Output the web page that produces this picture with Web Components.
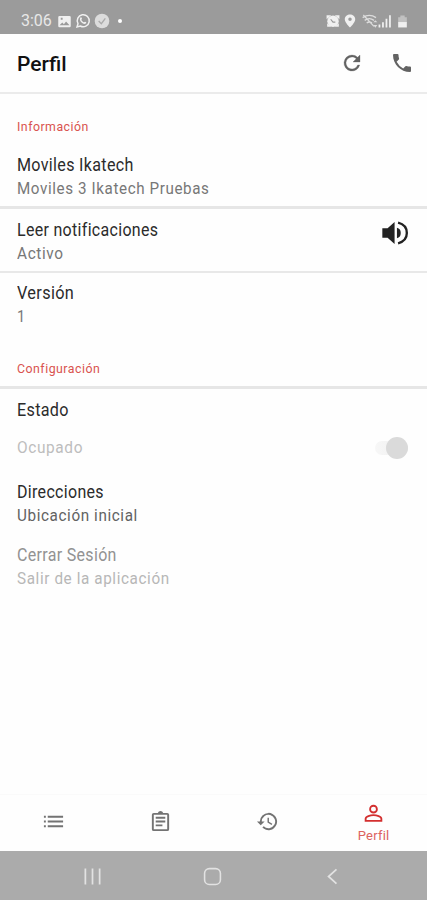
<!DOCTYPE html>
<html lang="es">
<head>
<meta charset="utf-8">
<title>Perfil</title>
<style>
  body { margin: 0; background: #fefefe; font-family: Roboto, "Liberation Sans", sans-serif; }
</style>
</head>
<body>
<app-perfil></app-perfil>

<script>
    // Texto ajustado a un ancho (letra condensada)
    class TextoAjustado extends HTMLElement {
      constructor() {
        super();
        this.attachShadow({ mode: 'open' });
      }

      connectedCallback() {
        this.shadowRoot.innerHTML = `
          <style>
            :host { display: block; white-space: nowrap; }
            span { display: inline-block; transform-origin: 0 50%; letter-spacing: var(--espacio, .04em); }
          </style>
          <span><slot></slot></span>
        `;
        const span = this.shadowRoot.querySelector('span');
        const ancho = parseFloat(this.getAttribute('ancho'));
        this.style.width = `${ancho}px`;
        span.style.transform = `scaleX(${ancho / span.offsetWidth})`;
      }
    }

    // Iconos
    const ICONOS = {
      imagen: '<path fill-rule="evenodd" d="M4 3h16a2 2 0 0 1 2 2v14a2 2 0 0 1-2 2H4a2 2 0 0 1-2-2V5a2 2 0 0 1 2-2zm0 15h16l-5.500-6-3.500 4.500-2.500-3zM6 6v3h3V6z"/>',
      whatsapp: '<path d="M3 21l1.500-5A9 9 0 1 1 8 19.500z" fill="none" stroke="currentColor" stroke-width="2.200"/><path d="M8 7c1-1 2-.5 2.500 1.500L9.500 10c1 2 2 3 4 4l1.500-1c2 .7 2.500 1.500 1.500 2.500C13 19 5 11 8 7z"/>',
      check: '<circle cx="12" cy="12" r="11"/><path d="M7 12l4 4 6-8" fill="none" stroke="#aaa" stroke-width="2"/>',
      alarma: '<circle cx="12" cy="12.500" r="9.800"/><path d="M1 9V2h8zM23 9V2h-8zM2 16v6h7zM22 16v6h-7z"/><path d="M8 9l4 5h4" fill="none" stroke="#999" stroke-width="2"/>',
      lugar: '<path fill-rule="evenodd" d="M12 1C7.500 1 3 4.500 3 9c0 6 9 14 9 14s9-8 9-14c0-4.500-4.500-8-9-8zm0 5a3 3 0 1 1 0 6 3 3 0 0 1 0-6z"/>',
      wifi: '<g fill="none" stroke="currentColor" stroke-width="2"><path d="M1 7q10-7 20 0M4 11q7-5 14 0M7 15q4-3 8 0M2 3l16 17"/></g><path d="M17 14l3-3 3 3zM17 18l3 4 3-4z"/>',
      senal: '<path d="M1 18h3v5H1zM7 14h3v9H7zM13 8h3v15h-3zM19 2h3v21h-3z"/>',
      bateria: '<path opacity=".45" d="M8 1h8v3h4v10H4V4h4z"/><path d="M4 13h16v10H4z"/>',
      recargar: '<path d="M17.650 6.350A7.960 7.960 0 0 0 12 4a8 8 0 1 0 7.730 10h-2.080A6 6 0 1 1 12 6c1.660 0 3.140.690 4.220 1.780L13 11h7V4z" stroke="currentColor" stroke-width=".3"/>',
      telefono: '<path d="M6.620 10.790a15.150 15.150 0 0 0 6.590 6.590l2.200-2.200a1 1 0 0 1 1.020-.240c1.120.370 2.330.570 3.570.570a1 1 0 0 1 1 1V20a1 1 0 0 1-1 1C10.610 21 3 13.390 3 4a1 1 0 0 1 1-1h3.500a1 1 0 0 1 1 1c0 1.250.200 2.450.570 3.570a1 1 0 0 1-.250 1.020z"/>',
      volumen: '<path d="M2 8h4.500L12.500 2.500v19L6.500 16H2z"/><path d="M14.500 7.500q3.300.8 3.300 4.500t-3.300 4.500z"/><path d="M15.500 3.200q7.500 2 7.500 8.800t-7.500 8.800" fill="none" stroke="currentColor" stroke-width="2"/>',
      lista: '<path d="M2 6h2v2H2zM2 11h2v2H2zM2 16h2v2H2zM6 6h16v2H6zM6 11h16v2H6zM6 16h16v2H6z"/>',
      notas: '<path fill-rule="evenodd" d="M19 3h-4.180a3 3 0 0 0-5.640 0H5a2 2 0 0 0-2 2v15a2 2 0 0 0 2 2h14a2 2 0 0 0 2-2V5a2 2 0 0 0-2-2zM5 5h14v15H5z"/><path d="M7 7h10v2H7zM7 11h10v2H7zM7 15h7v2H7z"/>',
      historial: '<path d="M13 3a9 9 0 0 0-9 9H1l3.890 3.890.070.140L9 12H6a7 7 0 1 1 2.060 4.940l-1.420 1.420A9 9 0 1 0 13 3zm-1 5v5l4.280 2.540.720-1.210-3.500-2.080V8z"/>',
      persona: '<g fill="none" stroke="currentColor" stroke-width="2.100"><circle cx="12" cy="7" r="3.900"/><path d="M3 20.500v-2.600c0-2.700 5.500-4 9-4s9 1.300 9 4v2.600z"/></g>',
      recientes: '<path d="M3 2v20M12 2v20M21 2v20" fill="none" stroke="currentColor" stroke-width="2.200"/>',
      inicio: '<rect x="2" y="2" width="20" height="20" rx="6" fill="none" stroke="currentColor" stroke-width="2"/>',
      atras: '<path d="M17 3L7 12l10 9" fill="none" stroke="currentColor" stroke-width="2.200"/>'
    };

    class MiIcono extends HTMLElement {
      constructor() {
        super();
        this.attachShadow({ mode: 'open' });
      }

      connectedCallback() {
        const tam = this.getAttribute('tam') || 24;
        this.shadowRoot.innerHTML = `
          <style>
            :host { display: block; flex: none; width: ${tam}px; height: ${tam}px; }
            svg { display: block; width: 100%; height: 100%; fill: currentColor; }
          </style>
          <svg viewBox="0 0 24 24">${ICONOS[this.getAttribute('nombre')]}</svg>
        `;
      }
    }

    class BarraEstado extends HTMLElement {
      constructor() {
        super();
        this.attachShadow({ mode: 'open' });
        this.shadowRoot.innerHTML = `
          <style>
            :host { display: flex; align-items: center; box-sizing: border-box; height: 34px; padding: 8px 18px 0 21px; background: #9b9b9b; color: #f0f0f0; }
            .hora { font-size: 16px; line-height: 26px; margin-right: 5px; color: #e8e8e8; --espacio: 0; }
            .grupo { display: flex; align-items: center; }
            .izq { gap: 3px; }
            .der { margin-left: auto; gap: 4px; }
            .lugar { margin: 0 1px 0 -1px; }
            .senal { margin-left: -4px; }
            .punto { width: 4px; height: 4px; margin-left: 5px; border-radius: 50%; background: #fff; }
            .tenue { color: #dcdcdc; }
          </style>
          <texto-ajustado class="hora" ancho="31">3:06</texto-ajustado>
          <div class="grupo izq">
            <mi-icono nombre="imagen" tam="15"></mi-icono>
            <mi-icono nombre="whatsapp" tam="16"></mi-icono>
            <mi-icono class="tenue" nombre="check" tam="16"></mi-icono>
            <div class="punto"></div>
          </div>
          <div class="grupo der">
            <mi-icono nombre="alarma" tam="14"></mi-icono>
            <mi-icono class="lugar" nombre="lugar" tam="14"></mi-icono>
            <mi-icono class="tenue" nombre="wifi" tam="16"></mi-icono>
            <mi-icono class="senal" nombre="senal" tam="14"></mi-icono>
            <mi-icono nombre="bateria" tam="13"></mi-icono>
          </div>
        `;
      }
    }

    class BarraTitulo extends HTMLElement {
      constructor() {
        super();
        this.attachShadow({ mode: 'open' });
        this.shadowRoot.innerHTML = `
          <style>
            :host { display: flex; align-items: center; box-sizing: border-box; height: 60px; padding: 0 13px 0 17px; border-bottom: 2px solid #ebebeb; color: #111; font-size: 21px; font-weight: 500; --espacio: 0; }
            .acciones { display: flex; gap: 26px; margin-left: auto; color: #636363; }
            ::slotted(*) { padding-top: 1px; }
          </style>
          <slot></slot>
          <div class="acciones">
            <mi-icono nombre="recargar"></mi-icono>
            <mi-icono nombre="telefono"></mi-icono>
          </div>
        `;
      }
    }

    class TituloSeccion extends HTMLElement {
      constructor() {
        super();
        this.attachShadow({ mode: 'open' });
        this.shadowRoot.innerHTML = `
          <style>
            :host { display: block; padding-left: 17px; color: #d9534f; font-size: 13px; line-height: 20px; }
          </style>
          <slot></slot>
        `;
      }
    }

    // Fila con título, detalle y un control a la derecha
    class FilaPerfil extends HTMLElement {
      constructor() {
        super();
        this.attachShadow({ mode: 'open' });
        this.shadowRoot.innerHTML = `
          <style>
            :host { display: flex; justify-content: space-between; align-items: center; box-sizing: border-box; padding: 0 19px 0 17px; line-height: 23px; }
            .titulo { color: #2b2b2b; font-size: 18px; line-height: 22px; padding-bottom: 1px; --espacio: .02em; }
            .detalle { color: #777; font-size: 16px; }
            :host([separado]) .detalle { margin-top: 14px; color: #bdbdbd; }
            :host([separado]) { align-items: flex-end; }
            :host([oscuro]) .detalle { color: #626262; }
            :host([apagado]) .titulo { color: #929292; }
            :host([apagado]) .detalle { color: #b7b7b7; }
          </style>
          <div>
            <div class="titulo"><slot name="titulo"></slot></div>
            <div class="detalle"><slot name="detalle"></slot></div>
          </div>
          <slot name="control"></slot>
        `;
      }
    }

    class InterruptorApagado extends HTMLElement {
      constructor() {
        super();
        this.attachShadow({ mode: 'open' });
        this.shadowRoot.innerHTML = `
          <style>
            :host { display: flex; align-items: center; justify-content: flex-end; width: 34px; height: 23px; }
            .pista { display: flex; align-items: center; justify-content: flex-end; width: 33px; height: 14px; border-radius: 7px; background: linear-gradient(90deg, #f7f7f7, #eee); }
            .bola { width: 22px; height: 22px; border-radius: 50%; background: #dadada; flex: none; }
          </style>
          <div class="pista"><div class="bola"></div></div>
        `;
      }
    }

    class BarraPestanas extends HTMLElement {
      constructor() {
        super();
        this.attachShadow({ mode: 'open' });
        this.shadowRoot.innerHTML = `
          <style>
            :host { display: grid; grid-template-columns: repeat(4, 1fr); height: 56px; border-top: 1px solid #fafafa; color: #737373; }
            div { display: flex; flex-direction: column; align-items: center; justify-content: center; padding: 0 0 3px 1px; }
            .activa { color: #d32f2f; font-size: 13px; line-height: 18px; padding: 2px 0 0; --espacio: .02em; }
            .activa texto-ajustado { margin-top: 3px; color: #dc625f; }
          </style>
          <div><mi-icono nombre="lista" tam="23"></mi-icono></div>
          <div><mi-icono nombre="notas" tam="23"></mi-icono></div>
          <div><mi-icono nombre="historial" tam="23"></mi-icono></div>
          <div class="activa">
            <mi-icono nombre="persona" tam="21"></mi-icono>
            <texto-ajustado ancho="32">Perfil</texto-ajustado>
          </div>
        `;
      }
    }

    class BarraSistema extends HTMLElement {
      constructor() {
        super();
        this.attachShadow({ mode: 'open' });
        this.shadowRoot.innerHTML = `
          <style>
            :host { display: flex; align-items: center; justify-content: center; gap: 101px; box-sizing: border-box; height: 49px; padding: 2px 3px 0 0; background: #ababab; color: #e2e2e2; }
          </style>
          <mi-icono nombre="recientes" tam="19"></mi-icono>
          <mi-icono nombre="inicio" tam="19"></mi-icono>
          <mi-icono nombre="atras" tam="19"></mi-icono>
        `;
      }
    }

    class AppPerfil extends HTMLElement {
      constructor() {
        super();
        this.attachShadow({ mode: 'open' });
        this.shadowRoot.innerHTML = `
          <style>
            :host { display: flex; flex-direction: column; height: 900px; overflow: hidden; }
            main { flex: 1; }
            hr { margin: 0; border: 0; height: 2px; background: #e8e8e8; }
            hr.gruesa { height: 3px; background: #e6e6e6; }
            .info { padding: 23px 0 17px; }
            .conf { padding: 31px 0 7px; }
            .primera { padding-bottom: 6px; }
            .notif { padding-top: 10px; padding-bottom: 6px; }
            .version { padding-top: 9px; }
            .estado { padding-top: 10px; }
            .direcciones { padding-top: 22px; }
            .cerrar { padding-top: 17px; }
            .volumen { margin-top: -18px; color: #222; }
          </style>
          <barra-estado></barra-estado>
          <barra-titulo><texto-ajustado ancho="50">Perfil</texto-ajustado></barra-titulo>
          <main>
            <div class="info"><titulo-seccion><texto-ajustado ancho="72">Información</texto-ajustado></titulo-seccion></div>
            <fila-perfil class="primera">
              <texto-ajustado slot="titulo" ancho="117">Moviles Ikatech</texto-ajustado>
              <texto-ajustado slot="detalle" ancho="192.5">Moviles 3 Ikatech Pruebas</texto-ajustado>
            </fila-perfil>
            <hr class="gruesa">
            <fila-perfil class="notif">
              <texto-ajustado slot="titulo" ancho="141">Leer notificaciones</texto-ajustado>
              <texto-ajustado slot="detalle" ancho="47">Activo</texto-ajustado>
              <mi-icono class="volumen" slot="control" nombre="volumen" tam="28"></mi-icono>
            </fila-perfil>
            <hr>
            <fila-perfil class="version">
              <texto-ajustado slot="titulo" ancho="57">Versión</texto-ajustado>
              <texto-ajustado slot="detalle" ancho="9">1</texto-ajustado>
            </fila-perfil>
            <div class="conf"><titulo-seccion><texto-ajustado ancho="83.5">Configuración</texto-ajustado></titulo-seccion></div>
            <hr class="gruesa">
            <fila-perfil class="estado" separado>
              <texto-ajustado slot="titulo" ancho="52">Estado</texto-ajustado>
              <texto-ajustado slot="detalle" ancho="66.5">Ocupado</texto-ajustado>
              <interruptor-apagado slot="control"></interruptor-apagado>
            </fila-perfil>
            <fila-perfil class="direcciones" oscuro>
              <texto-ajustado slot="titulo" ancho="87">Direcciones</texto-ajustado>
              <texto-ajustado slot="detalle" ancho="121">Ubicación inicial</texto-ajustado>
            </fila-perfil>
            <fila-perfil class="cerrar" apagado>
              <texto-ajustado slot="titulo" ancho="99.5">Cerrar Sesión</texto-ajustado>
              <texto-ajustado slot="detalle" ancho="152.5">Salir de la aplicación</texto-ajustado>
            </fila-perfil>
          </main>
          <barra-pestanas></barra-pestanas>
          <barra-sistema></barra-sistema>
        `;
      }
    }

    // Registrar los elementos, primero los más internos
    customElements.define('texto-ajustado', TextoAjustado);
    customElements.define('mi-icono', MiIcono);
    customElements.define('barra-estado', BarraEstado);
    customElements.define('barra-titulo', BarraTitulo);
    customElements.define('titulo-seccion', TituloSeccion);
    customElements.define('fila-perfil', FilaPerfil);
    customElements.define('interruptor-apagado', InterruptorApagado);
    customElements.define('barra-pestanas', BarraPestanas);
    customElements.define('barra-sistema', BarraSistema);
    customElements.define('app-perfil', AppPerfil);
</script>
</body>
</html>
